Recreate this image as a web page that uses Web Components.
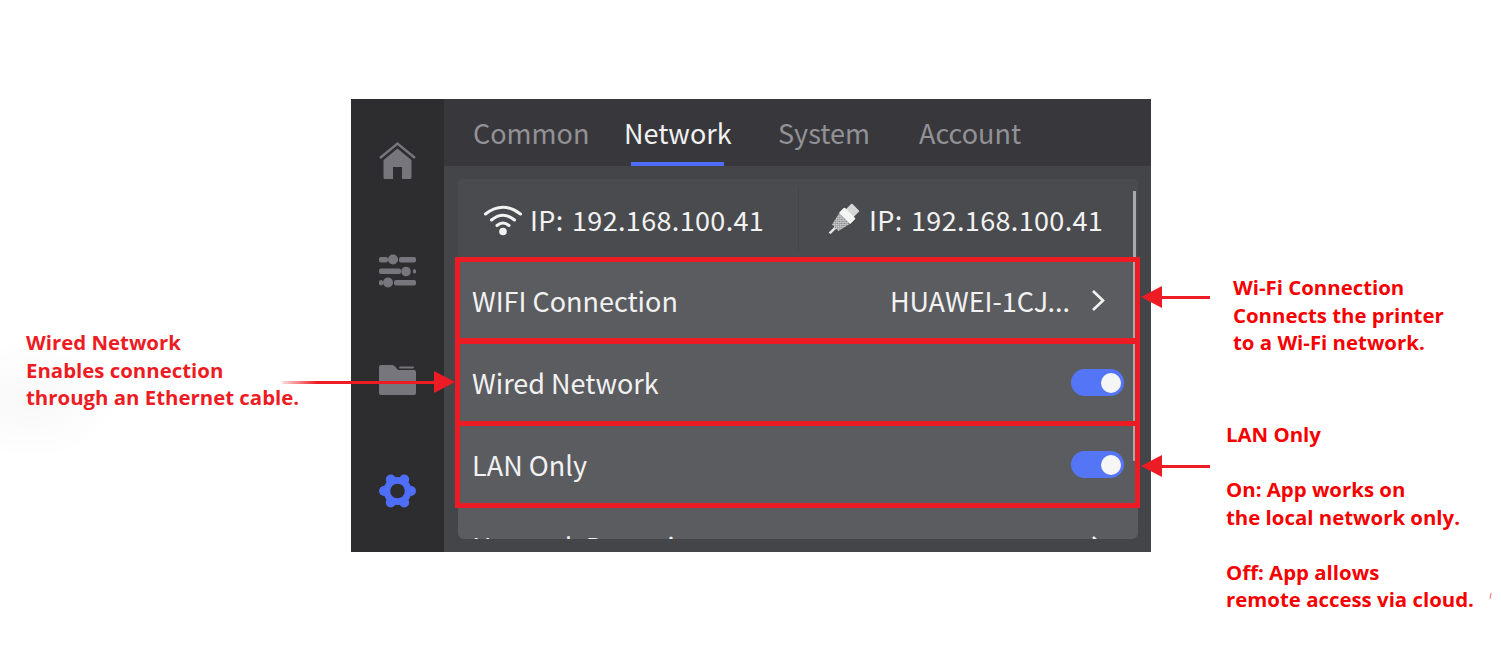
<!DOCTYPE html>
<html>
<head>
<meta charset="utf-8">
<title>Network settings</title>
<style>
html, body { margin: 0; background: #fff; }
body { width: 1501px; height: 651px; overflow: hidden; }
</style>
</head>
<body>
<guide-page>
  <printer-screen>
    <side-nav slot="nav"></side-nav>
    <tab-bar slot="tabs">
      <tab-item>Common</tab-item>
      <tab-item active>Network</tab-item>
      <tab-item>System</tab-item>
      <tab-item>Account</tab-item>
    </tab-bar>
    <settings-card slot="card">
      <ip-row></ip-row>
      <setting-row label="WIFI Connection" value="HUAWEI-1CJ..." chevron></setting-row>
      <setting-row label="Wired Network" toggle></setting-row>
      <setting-row label="LAN Only" toggle></setting-row>
      <setting-row label="Network Detection" chevron></setting-row>
    </settings-card>
    <red-box slot="marks" style="top:158px;height:87px"></red-box>
    <red-box slot="marks" style="top:239px;height:88px"></red-box>
    <red-box slot="marks" style="top:322px;height:87px"></red-box>
  </printer-screen>

  <call-out style="left:26px;top:329px;color:#ed1c24">Wired Network<br>Enables connection<br>through an Ethernet cable.</call-out>
  <call-out style="left:1233px;top:274px">Wi-Fi Connection<br>Connects the printer<br>to a Wi-Fi network.</call-out>
  <call-out style="left:1226px;top:421px">LAN Only<br><br>On: App works on<br>the local network only.<br><br>Off: App allows<br>remote access via cloud.</call-out>

  <red-arrow dir="right" style="left:282px;top:371px;width:173px"></red-arrow>
  <red-arrow style="left:1141px;top:286px;width:69px"></red-arrow>
  <red-arrow style="left:1141px;top:455px;width:69px"></red-arrow>
</guide-page>

<script>
const UI_FONT = '"Noto Sans CJK SC", "Noto Sans", sans-serif';

class GuidePage extends HTMLElement {
  constructor() {
    super();
    this.attachShadow({ mode: 'open' });
    this.shadowRoot.innerHTML = `
    <style>
    :host { display: block; position: relative; width: 1501px; height: 651px; padding: 99px 0 0 351px; box-sizing: border-box; background: radial-gradient(ellipse 90px 60px at 30px 400px, #f8f8f8, transparent); }
    /* stray speck left in the source image */
    .speck { position: absolute; left: 1490px; top: 593px; width: 1px; height: 6px; background: #f66; transform: rotate(12deg); }
    </style>
    <slot></slot>
    <div class="speck"></div>`;
  }
}

class PrinterScreen extends HTMLElement {
  constructor() {
    super();
    this.attachShadow({ mode: 'open' });
    this.shadowRoot.innerHTML = `
    <style>
    :host { display: grid; position: relative; width: 800px; height: 453px; grid-template-columns: 93px 1fr; grid-template-rows: 67px 1fr; background: #444549; }
    .nav { grid-row: 1 / 3; display: grid; }
    .card { padding: 13px 13px 13px 14px; min-height: 0; display: grid; }
    </style>
    <div class="nav"><slot name="nav"></slot></div>
    <slot name="tabs"></slot>
    <div class="card"><slot name="card"></slot></div>
    <slot name="marks"></slot>`;
  }
}

class SideNav extends HTMLElement {
  constructor() {
    super();
    this.attachShadow({ mode: 'open' });
    this.shadowRoot.innerHTML = `
    <style>
    :host { display: grid; grid-template-rows: repeat(4, 110px); padding-top: 6px; background: #2d2d2f; justify-items: center; align-items: center; }
    svg { display: block; width: 37px; height: 37px; overflow: visible; }
    </style>
    <!-- home -->
    <svg viewBox="0 0 37 37" fill="#76767c">
      <path d="M1 16 L18.5 1.5 L36 16" fill="none" stroke="#76767c" stroke-width="2.4"/>
      <path d="M4.5 18 L18.5 6.5 L32.5 18 V35.5 Q32.5 37 31 37 H23 V25 H14 V37 H6 Q4.5 37 4.5 35.5 Z"/>
    </svg>
    <!-- sliders -->
    <svg viewBox="0 0 37 37" fill="#76767c" stroke="none">
      <rect x="0" y="5" width="9" height="5.5" rx="2"/><circle cx="14" cy="7.5" r="5"/><rect x="20" y="5" width="17" height="5.5" rx="2"/>
      <rect x="0" y="16.5" width="22" height="5.5" rx="2"/><circle cx="27" cy="19.5" r="4.8"/><rect x="34" y="17" width="3" height="4.5" rx="1.5"/>
      <rect x="0" y="28" width="4" height="5.5" rx="2"/><circle cx="9" cy="30.5" r="5"/><rect x="15" y="28" width="22" height="5.5" rx="2"/>
    </svg>
    <!-- folder -->
    <svg viewBox="0 0 37 37" fill="#76767c">
      <path d="M2 3 H13 Q15 3 16.5 5 L19 8 H35 Q37 8 37 10 V31 Q37 33 35 33 H2 Q0 33 0 31 V5 Q0 3 2 3 Z"/>
      <rect x="20" y="4.5" width="15" height="2" rx="1"/>
    </svg>
    <!-- gear -->
    <svg viewBox="0 0 37 37" fill="#4f6ef7">
      <circle cx="18.5" cy="19" r="14"/>
      <circle cx="32" cy="19" r="5"/><circle cx="5" cy="19" r="5"/>
      <circle cx="25.2" cy="7.5" r="5"/><circle cx="11.8" cy="7.5" r="5"/>
      <circle cx="25.2" cy="30.5" r="5"/><circle cx="11.8" cy="30.5" r="5"/>
      <circle cx="18.5" cy="19" r="7.3" fill="#2d2d2f"/>
    </svg>`;
  }
}

class TabBar extends HTMLElement {
  constructor() {
    super();
    this.attachShadow({ mode: 'open' });
    this.shadowRoot.innerHTML = `
    <style>
    :host { display: grid; grid-template-columns: 151px 154px 141px auto; padding-left: 29px; background: #38383c; font: 400 27px ${UI_FONT}; }
    </style>
    <slot></slot>`;
  }
}

class TabItem extends HTMLElement {
  constructor() {
    super();
    this.attachShadow({ mode: 'open' });
    this.shadowRoot.innerHTML = `
    <style>
    :host { display: flex; position: relative; align-items: center; height: 67px; padding-bottom: 1px; box-sizing: border-box; color: #929296; white-space: nowrap; }
    :host([active]) { color: #f2f2f2; }
    :host([active])::after { content: ""; position: absolute; left: 7px; bottom: 0; width: 93px; height: 4px; background: #4f6ef7; }
    </style>
    <slot></slot>`;
  }
}

class SettingsCard extends HTMLElement {
  constructor() {
    super();
    this.attachShadow({ mode: 'open' });
    this.shadowRoot.innerHTML = `
    <style>
    :host { display: block; position: relative; overflow: hidden; border-radius: 6px; background: #5b5c60; font: 400 27px ${UI_FONT}; color: #f2f2f2; }
    .bar { position: absolute; right: 2px; top: 12px; width: 3px; height: 270px; background: #a9a9ab; }
    </style>
    <slot></slot>
    <div class="bar"></div>`;
  }
}

class IpRow extends HTMLElement {
  constructor() {
    super();
    this.attachShadow({ mode: 'open' });
    this.shadowRoot.innerHTML = `
    <style>
    :host { display: grid; grid-template-columns: 340px 340px; height: 81px; background: #4a4b4f; }
    .cell { display: flex; align-items: center; gap: 8px; padding-left: 26px; white-space: nowrap; letter-spacing: .35px; word-spacing: 2px; }
    .cell + .cell { gap: 9px; padding-left: 28px; position: relative; }
    .cell + .cell::before { content: ""; position: absolute; left: 0; top: 7px; height: 66px; width: 1px; background: #444549; }
    svg { display: block; flex: none; }
    </style>
    <div class="cell">
      <svg width="38" height="32" viewBox="0 0 38 32" fill="none" stroke="#f2f2f2" stroke-width="3" stroke-linecap="round">
        <path d="M1.5 10 Q19 -3.5 36.5 10"/>
        <path d="M7.5 16 Q19 6.5 30.5 16"/>
        <path d="M13 21.5 Q19 16.5 25 21.5"/>
        <circle cx="19" cy="27.5" r="3.8" fill="#f2f2f2" stroke="none"/>
      </svg>
      <span>IP: 192.168.100.41</span>
    </div>
    <div class="cell">
      <svg width="34" height="34" viewBox="0 0 34 34" style="overflow:visible">
        <defs><pattern id="dots" width="3" height="3" patternUnits="userSpaceOnUse"><rect width="3" height="3" fill="#77787b"/><rect width="1.5" height="1.5" fill="#ececec"/><rect x="1.5" y="1.5" width="1.5" height="1.5" fill="#ececec"/></pattern></defs>
        <g transform="rotate(45 17 17)">
          <rect x="11.5" y="-1" width="11" height="9" rx="1" fill="#d6d6d6"/>
          <rect x="9" y="7" width="16" height="8" rx="1" fill="#f5f5f5"/>
          <path d="M9.5 15 H24.5 L21.5 28 H12.5 Z" fill="url(#dots)"/>
          <path d="M17 28 V36" stroke="#e6e6e6" stroke-width="2.4"/>
        </g>
      </svg>
      <span>IP: 192.168.100.41</span>
    </div>`;
  }
}

class SettingRow extends HTMLElement {
  constructor() {
    super();
    this.attachShadow({ mode: 'open' });
    const value = this.getAttribute('value');
    this.shadowRoot.innerHTML = `
    <style>
    :host { display: flex; align-items: center; justify-content: space-between; height: 82px; padding: 0 14px 2px; box-sizing: border-box; white-space: nowrap; }
    .right { display: flex; align-items: center; gap: 21px; padding-right: 19px; }
    toggle-switch { margin-top: 1px; }
    svg { display: block; }
    </style>
    <span>${this.getAttribute('label')}</span>
    ${this.hasAttribute('toggle') ? '<toggle-switch></toggle-switch>' : `<div class="right">${value ? `<span>${value}</span>` : ''}
      <svg width="14" height="23" viewBox="0 0 14 23" fill="none" stroke="#f2f2f2" stroke-width="2.6"><path d="M2 2 L12 11.5 L2 21"/></svg></div>`}`;
  }
}

class ToggleSwitch extends HTMLElement {
  constructor() {
    super();
    this.attachShadow({ mode: 'open' });
    this.shadowRoot.innerHTML = `
    <style>
    :host { display: flex; align-items: center; justify-content: flex-end; width: 53px; height: 27px; padding-right: 3px; box-sizing: border-box; border-radius: 14px; background: #5575f7; }
    i { width: 20px; height: 20px; border-radius: 50%; background: #f6f6f6; }
    </style>
    <i></i>`;
  }
}

// annotation marks sit on top of the screen
class RedBox extends HTMLElement {
  constructor() {
    super();
    this.attachShadow({ mode: 'open' });
    this.shadowRoot.innerHTML = `
    <style>
    :host { display: block; position: absolute; left: 104px; width: 685px; box-sizing: border-box; border: 5px solid #ed1c24; }
    </style>`;
  }
}

class RedArrow extends HTMLElement {
  constructor() {
    super();
    this.attachShadow({ mode: 'open' });
    const right = this.getAttribute('dir') === 'right';
    this.shadowRoot.innerHTML = `
    <style>
    :host { display: flex; position: absolute; height: 22px; align-items: center; flex-direction: ${right ? 'row' : 'row-reverse'}; }
    .line { flex: 1; height: 3px; background: ${right ? 'linear-gradient(90deg, rgba(237,28,36,.15), #ed1c24 35px)' : '#ed1c24'}; }
    svg { display: block; }
    </style>
    <div class="line"></div>
    <svg width="21" height="22" viewBox="0 0 21 22" fill="#ed1c24"><path d="${right ? 'M0 0 L21 11 L0 22 Z' : 'M21 0 L0 11 L21 22 Z'}"/></svg>`;
  }
}

class CallOut extends HTMLElement {
  constructor() {
    super();
    this.attachShadow({ mode: 'open' });
    this.shadowRoot.innerHTML = `
    <style>
    :host { display: block; position: absolute; font: 700 20.4px/27.5px "Open Sans", Lato, sans-serif; color: #f60000; white-space: nowrap; }
    </style>
    <slot></slot>`;
  }
}

customElements.define('guide-page', GuidePage);
customElements.define('printer-screen', PrinterScreen);
customElements.define('side-nav', SideNav);
customElements.define('tab-bar', TabBar);
customElements.define('tab-item', TabItem);
customElements.define('settings-card', SettingsCard);
customElements.define('ip-row', IpRow);
customElements.define('setting-row', SettingRow);
customElements.define('toggle-switch', ToggleSwitch);
customElements.define('red-box', RedBox);
customElements.define('red-arrow', RedArrow);
customElements.define('call-out', CallOut);
</script>
</body>
</html>
